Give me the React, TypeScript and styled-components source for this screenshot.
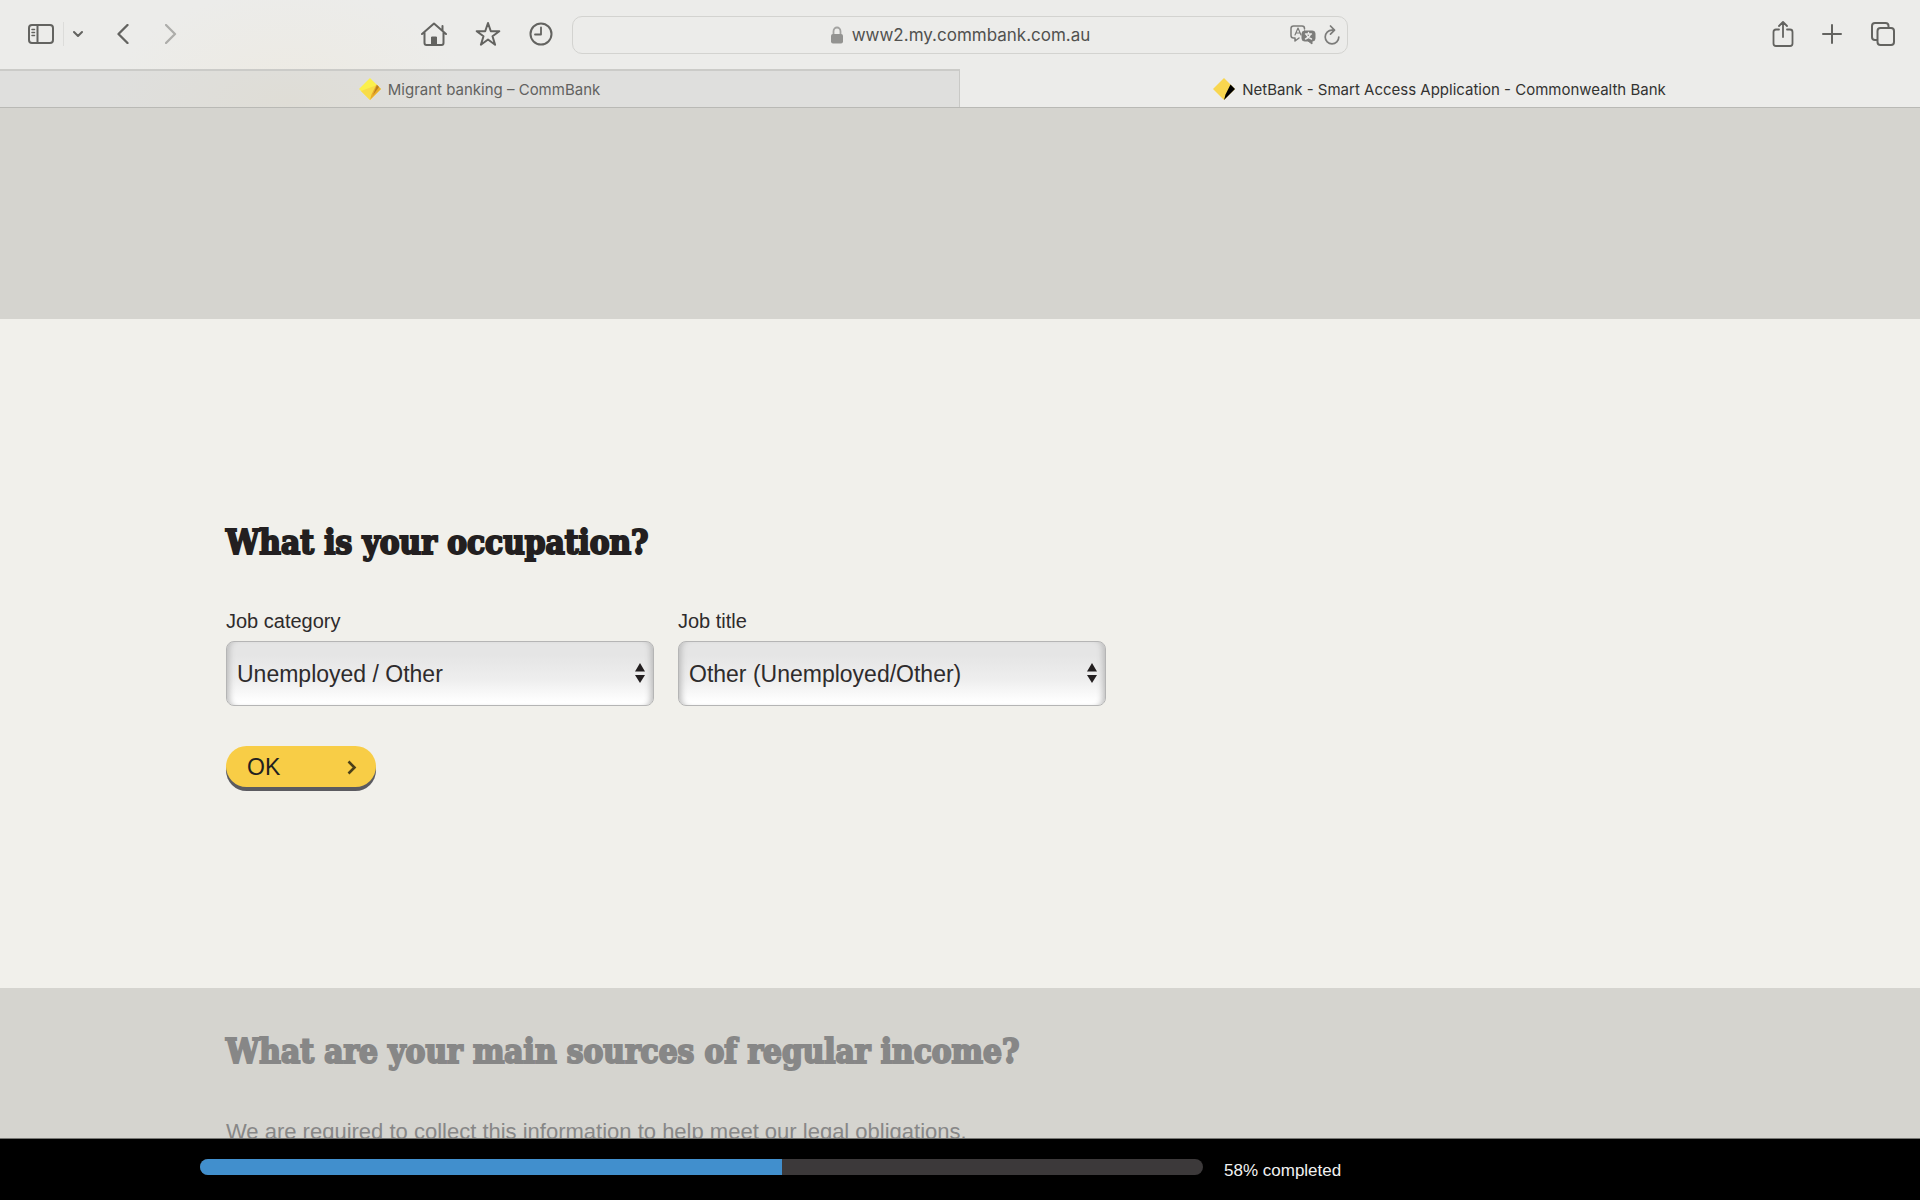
import React from "react";
import styled, { createGlobalStyle } from "styled-components";

const sans = '"Liberation Sans", Arial, sans-serif';
const ui = 'Inter, "Liberation Sans", sans-serif';

const GlobalStyle = createGlobalStyle`
  *, *::before, *::after { box-sizing: border-box; }
  body { margin: 0; background: #d5d4cf; font-family: ${sans}; }
  h2, p { margin: 0; }
  button, select { font: inherit; color: inherit; }
`;

const Shell = styled.div`
  display: flex;
  flex-direction: column;
  height: 100vh;
  overflow: hidden;
`;

const Chrome = styled.header`
  flex: none;
  background: radial-gradient(ellipse 180px 110px at 290px 100px, #edeae2, #ececea);
  color: #636360;
  font-family: ${ui};
`;

const Toolbar = styled.div`
  display: grid;
  grid-template-columns: 1fr 776px 1fr;
  align-items: center;
  height: 69px;
  padding: 0 24px;
`;

const Group = styled.div<{ $gap: number }>`
  display: flex;
  align-items: center;
  gap: ${(p) => p.$gap}px;
`;

const Side = styled.div<{ $end?: boolean }>`
  display: flex;
  align-items: center;
  justify-content: ${(p) => (p.$end ? "flex-end" : "space-between")};
  padding-right: ${(p) => (p.$end ? 0 : 19)}px;
  padding-bottom: 2px;
`;

const IconButton = styled.button<{ $dim?: boolean }>`
  display: flex;
  padding: 0;
  border: 0;
  background: none;
  opacity: ${(p) => (p.$dim ? 0.45 : 1)};

  svg { display: block; }
`;

const Divider = styled.span`
  width: 1px;
  height: 24px;
  background: #dcdcda;
`;

const Address = styled.div`
  display: grid;
  grid-template-columns: 1fr auto 1fr;
  align-items: center;
  height: 38px;
  margin-top: 1px;
  padding: 0 7px;
  border: 1px solid #d3d3d0;
  border-radius: 10px;
  font-size: 17px;
  color: #51514f;
`;

const Url = styled.span`
  grid-column: 2;
  display: flex;
  align-items: center;
  gap: 8px;
`;

const AddressTools = styled.span`
  display: flex;
  align-items: center;
  justify-content: flex-end;
  gap: 8px;
  color: #7c7c7a;
`;

const Tabs = styled.nav`
  display: grid;
  grid-template-columns: 1fr 1fr;
  height: 39px;
  border-bottom: 1px solid #b9b9b5;
`;

const Tab = styled.a<{ $active?: boolean }>`
  display: flex;
  align-items: center;
  justify-content: center;
  gap: 7px;
  border-top: 2px solid ${(p) => (p.$active ? "transparent" : "#cbcbc8")};
  border-right: 1px solid ${(p) => (p.$active ? "transparent" : "#c9c9c6")};
  background: ${(p) =>
    p.$active
      ? "none"
      : "radial-gradient(ellipse 180px 70px at 290px 30px, #dfddd6, #dfdfdd)"};
  color: ${(p) => (p.$active ? "#333331" : "#62625f")};
  font-size: 15px;
  text-decoration: none;
`;

const Page = styled.main`
  flex: 1;
  min-height: 0;
  overflow: hidden;
  background: #d5d4cf;
  color: #231f20;
`;

const Previous = styled.div`
  height: 211px;
`;

const Question = styled.section<{ $current?: boolean }>`
  padding: ${(p) => (p.$current ? "200px 226px 201px" : "40px 226px")};
  background: ${(p) => (p.$current ? "#f1f0eb" : "#d5d4cf")};
  color: ${(p) => (p.$current ? "#231f20" : "#878787")};
`;

const Title = styled.h2`
  font: bold 33px/48px "DejaVu Serif Condensed", "DejaVu Serif", serif;
  font-stretch: condensed;
  -webkit-text-stroke: 2px currentColor;
`;

const Fields = styled.div`
  display: flex;
  gap: 24px;
  margin-top: 39px;
  color: #2e2b2c;
`;

const Field = styled.div`
  width: 428px;
`;

const Label = styled.label`
  display: block;
  height: 35px;
  font-size: 20px;
  line-height: 30px;
`;

const SelectBox = styled.div`
  position: relative;

  svg {
    position: absolute;
    right: 9px;
    top: 22px;
    pointer-events: none;
  }
`;

const Select = styled.select`
  display: block;
  width: 100%;
  height: 65px;
  padding: 0 32px 0 10px;
  appearance: none;
  border: 1px solid #b5b5b5;
  border-radius: 8px;
  background: linear-gradient(#e5e5e5 20%, #eeeeee 60%, #ffffff 95%);
  box-shadow: inset 7px 0 6px -5px #b8b8b8, inset -7px 0 6px -5px #b8b8b8;
  font-size: 23px;
`;

const OkButton = styled.button`
  display: flex;
  align-items: center;
  justify-content: space-between;
  width: 150px;
  height: 41px;
  margin-top: 40px;
  padding: 2px 19px 0 21px;
  border: 0;
  border-radius: 21px;
  background: #f8cd46;
  box-shadow: 0 4px 0 #5b5b60;
  font-size: 23px;
`;

const Note = styled.p`
  margin-top: 40px;
  font-size: 22px;
  line-height: 32px;
`;

const Footer = styled.footer`
  display: flex;
  flex: none;
  align-items: center;
  gap: 21px;
  height: 62px;
  padding: 2px 200px 0;
  border-top: 1px solid #777774;
  background: #000;
  color: #f2f2f2;
  font-size: 17px;
`;

const Track = styled.div`
  width: 1003px;
  height: 16px;
  margin-bottom: 7px;
  overflow: hidden;
  border-radius: 8px;
  background: #3c393a;
`;

const Fill = styled.div`
  height: 100%;
  background: #418fcd;
`;

type IconProps = { w: number; h: number; sw?: number; children: React.ReactNode };

const Icon = ({ w, h, sw = 2, children }: IconProps) => (
  <svg
    width={w}
    height={h}
    viewBox={`0 0 ${w} ${h}`}
    fill="none"
    stroke="currentColor"
    strokeWidth={sw}
    strokeLinecap="round"
    strokeLinejoin="round"
    aria-hidden="true"
  >
    {children}
  </svg>
);

const Diamond = ({ faded }: { faded?: boolean }) => (
  <svg width="22" height="22" viewBox="0 0 22 22" aria-hidden="true">
    <path d="M11 0 0 11l11 11 11-11z" fill={faded ? "#fbf04c" : "#f8d64f"} />
    {faded && <path d="M2 13l9 9 7-15z" fill="#f8dc48" />}
    <path d="M17.500 6.500L22 11 11 22l1.500-5.500z" fill={faded ? "#e9ac2c" : "#000"} />
    {faded && <path d="M18 7l2 2-6 8z" fill="#b97f20" />}
  </svg>
);

const SelectField = ({ id, label, value }: { id: string; label: string; value: string }) => (
  <Field>
    <Label htmlFor={id}>{label}</Label>
    <SelectBox>
      <Select id={id} defaultValue={value}>
        <option>{value}</option>
      </Select>
      <svg width="10" height="20" viewBox="0 0 10 20" fill="#231f20" aria-hidden="true">
        <path d="M5 0l5 8.500H0zM0 12h10l-5 8z" />
      </svg>
    </SelectBox>
  </Field>
);

export default function App() {
  const progress = 58;
  return (
    <>
      <GlobalStyle />
      <Shell>
        <Chrome>
          <Toolbar>
            <Side>
              <Group $gap={34}>
                <Group $gap={9}>
                  <IconButton aria-label="Show sidebar">
                    <Icon w={30} h={22}>
                      <rect x="5" y="2" width="24" height="18" rx="3" />
                      <path d="M13.500 2v18" />
                      <path d="M8 6.500h2.500M8 9.500h2.500M8 12.500h2.500" strokeWidth="1.500" />
                    </Icon>
                  </IconButton>
                  <Divider />
                  <IconButton aria-label="Tab groups">
                    <Icon w={10} h={8}>
                      <path d="M1 2l4 4 4-4" />
                    </Icon>
                  </IconButton>
                </Group>
                <Group $gap={36}>
                  <IconButton aria-label="Back">
                    <Icon w={12} h={20}>
                      <path d="M10.500 1L1.500 10l9 9" strokeWidth="2.300" />
                    </Icon>
                  </IconButton>
                  <IconButton aria-label="Forward" $dim>
                    <Icon w={12} h={20}>
                      <path d="M1 1l9 9-9 9" strokeWidth="2.300" />
                    </Icon>
                  </IconButton>
                </Group>
              </Group>
              <Group $gap={28}>
                <IconButton aria-label="Home">
                  <Icon w={26} h={24}>
                    <path d="M1 12L13 1.500 25 12M3.500 10.500V21q0 2 2 2h15q2 0 2-2V10.500M21.500 8.500V4" />
                    <path d="M10.500 22.500V15h5v7.500z" fill="currentColor" strokeWidth="1" />
                  </Icon>
                </IconButton>
                <IconButton aria-label="Bookmarks">
                  <Icon w={26} h={26}>
                    <path d="M13 2l2.800 8.200H24.300l-6.800 5 2.600 8.500L13 18.500l-7.100 5.200 2.600-8.500-6.800-5h8.500z" />
                  </Icon>
                </IconButton>
                <IconButton aria-label="History">
                  <Icon w={24} h={24}>
                    <circle cx="12" cy="12" r="10.500" />
                    <path d="M12 5.500v7H6" strokeWidth="1.800" />
                  </Icon>
                </IconButton>
              </Group>
            </Side>
            <Address>
              <Url>
                <Icon w={14} h={18}>
                  <path d="M3.500 9V5.500a3.500 4 0 0 1 7 0V9" stroke="#a3a3a1" strokeWidth="1.800" />
                  <rect x="1" y="8" width="12" height="9.500" rx="2" fill="#939391" stroke="none" />
                </Icon>
                www2.my.commbank.com.au
              </Url>
              <AddressTools>
                <IconButton aria-label="Translate">
                  <Icon w={26} h={20} sw={1}>
                    <path d="M9 13l-4 3v-3H3.500Q1 13 1 10.500v-7Q1 1 3.500 1H12q2.500 0 2.500 2.500V4" strokeWidth="1.500" />
                    <path d="M5 10l3-7 3 7M6 8h4" strokeWidth="1.200" />
                    <path d="M14.500 6h8Q25 6 25 8.500v5q0 2.500-2.500 2.500H22v3l-4-3h-3.500Q12 16 12 13.500v-5Q12 6 14.500 6z" fill="currentColor" />
                    <path d="M15.500 9h6M18.500 7.500V9M20.500 9q-1 3.500-5 5M16.500 10q1.500 3 5 4" stroke="#ececea" strokeWidth="1.400" />
                  </Icon>
                </IconButton>
                <IconButton aria-label="Reload">
                  <Icon w={16} h={20} sw={1}>
                    <path d="M9.500 5.200H8A6.800 6.800 0 1 0 14.800 12M6.500 1l4 4.200-4 4" strokeWidth="1.700" />
                  </Icon>
                </IconButton>
              </AddressTools>
            </Address>
            <Side $end>
              <Group $gap={28}>
                <IconButton aria-label="Share">
                  <Icon w={22} h={26}>
                    <path d="M7 8.500H4q-2.500 0-2.500 2.500v11.500Q1.500 25 4 25h14q2.500 0 2.500-2.500V11q0-2.500-2.500-2.500h-3M11 16V1.500M7 5l4-4 4 4" strokeWidth="1.800" />
                  </Icon>
                </IconButton>
                <IconButton aria-label="New tab">
                  <Icon w={20} h={20}>
                    <path d="M10 1v18M1 10h18" />
                  </Icon>
                </IconButton>
                <IconButton aria-label="Show all tabs">
                  <Icon w={26} h={26}>
                    <rect x="7.500" y="7" width="16.500" height="17" rx="3" />
                    <path d="M7 19H5q-3 0-3-3V5q0-3 3-3h10.500q3 0 3 3v1.500" />
                  </Icon>
                </IconButton>
              </Group>
            </Side>
          </Toolbar>
          <Tabs aria-label="Open tabs">
            <Tab href="#migrant">
              <Diamond faded />
              Migrant banking – CommBank
            </Tab>
            <Tab href="#netbank" $active>
              <Diamond />
              NetBank - Smart Access Application - Commonwealth Bank
            </Tab>
          </Tabs>
        </Chrome>
        <Page>
          <Previous />
          <Question $current>
            <Title>What is your occupation?</Title>
            <Fields>
              <SelectField id="job-category" label="Job category" value="Unemployed / Other" />
              <SelectField id="job-title" label="Job title" value="Other (Unemployed/Other)" />
            </Fields>
            <OkButton>
              OK
              <Icon w={10} h={16} sw={3}>
                <path d="M1.500 1.500l6 6-6 6" stroke="#4b4019" strokeWidth="2.600" strokeLinecap="butt" strokeLinejoin="miter" />
              </Icon>
            </OkButton>
          </Question>
          <Question>
            <Title>What are your main sources of regular income?</Title>
            <Note>We are required to collect this information to help meet our legal obligations.</Note>
          </Question>
        </Page>
        <Footer>
          <Track role="progressbar" aria-label="Application progress" aria-valuenow={progress} aria-valuemin={0} aria-valuemax={100}>
            <Fill style={{ width: `${progress}%` }} />
          </Track>
          <span>{progress}% completed</span>
        </Footer>
      </Shell>
    </>
  );
}
